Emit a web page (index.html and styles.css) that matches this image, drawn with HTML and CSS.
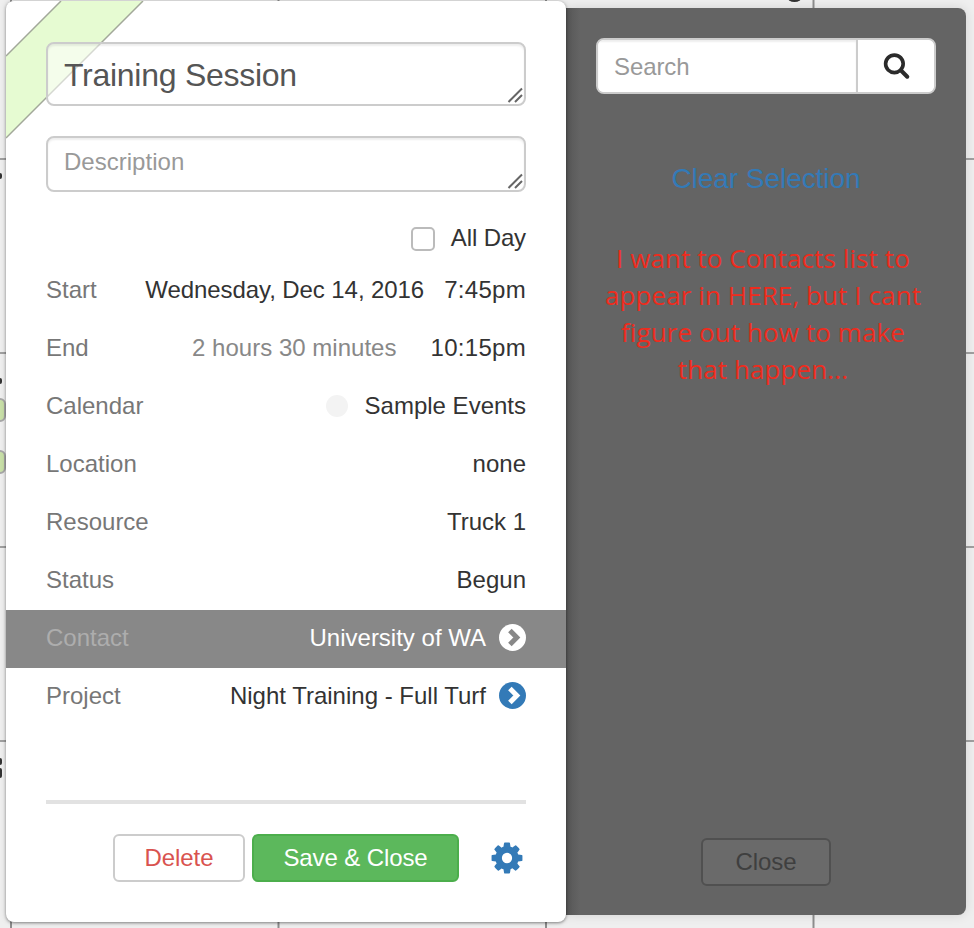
FILE: index.html
```html
<!DOCTYPE html>
<html lang="en">
<head>
<meta charset="utf-8">
<title>Training Session</title>
<link rel="stylesheet" href="styles.css">
</head>
<body>
<div class="calendar">
  <span class="day-dot"></span>
  <span class="pill pill-a"></span>
  <span class="pill pill-b"></span>
  <span class="date-mark mark-a"></span>
  <span class="date-mark mark-b"></span>
  <span class="date-mark mark-c"></span>
  <span class="date-mark mark-d"></span>
</div>
<main class="popover">
  <section class="card">
    <svg class="band" width="140" height="140" viewBox="0 0 140 140" aria-hidden="true">
      <polygon points="55,0 137,0 0,137 0,55" fill="#e6fbd2"/>
      <path d="M55 0 0 55M137 0 0 137" stroke="#a2a89a" stroke-width="1.5" fill="none"/>
    </svg>
    <div class="card-body">
      <div class="field-wrap">
        <textarea class="field field-title" rows="1">Training Session</textarea>
        <svg class="grip" width="16" height="16" viewBox="0 0 16 16" aria-hidden="true"><path d="M1.5 15 15 1.5M8 15 15 8" stroke="#666" stroke-width="2" fill="none"/></svg>
      </div>
      <div class="field-wrap field-wrap-desc">
        <textarea class="field field-desc" rows="1" placeholder="Description"></textarea>
        <svg class="grip" width="16" height="16" viewBox="0 0 16 16" aria-hidden="true"><path d="M1.5 15 15 1.5M8 15 15 8" stroke="#666" stroke-width="2" fill="none"/></svg>
      </div>
      <label class="allday"><input class="check" type="checkbox"><span class="allday-text">All Day</span></label>
      <div class="row"><span class="label">Start</span><span class="value date-pair"><span>Wednesday, Dec 14, 2016</span><span class="time">7:45pm</span></span></div>
      <div class="row"><span class="label">End</span><span class="value date-pair wide"><span class="muted">2 hours 30 minutes</span><span class="time">10:15pm</span></span></div>
      <div class="row"><span class="label">Calendar</span><span class="value cal-value"><span class="cal-dot"></span><span>Sample Events</span></span></div>
      <div class="row"><span class="label">Location</span><span class="value">none</span></div>
      <div class="row"><span class="label">Resource</span><span class="value">Truck 1</span></div>
      <div class="row"><span class="label">Status</span><span class="value">Begun</span></div>
      <div class="row row-active"><span class="label">Contact</span><span class="value link-value"><span>University of WA</span>
        <svg class="chev" width="27" height="27" viewBox="0 0 27 27" aria-hidden="true"><circle cx="13.5" cy="13.5" r="13.5" fill="#fff"/><path d="M10.9 6.6 17.8 13.5 10.9 20.4" fill="none" stroke="#888" stroke-width="5"/></svg></span></div>
      <div class="row"><span class="label">Project</span><span class="value link-value"><span>Night Training - Full Turf</span>
        <svg class="chev" width="27" height="27" viewBox="0 0 27 27" aria-hidden="true"><circle cx="13.5" cy="13.5" r="13.5" fill="#337ab7"/><path d="M10.9 6.6 17.8 13.5 10.9 20.4" fill="none" stroke="#fff" stroke-width="5"/></svg></span></div>
      <div class="divider"></div>
      <div class="actions">
        <button class="btn btn-delete" type="button">Delete</button>
        <button class="btn btn-save" type="button">Save &amp; Close</button>
        <svg class="gear" width="36" height="36" viewBox="0 0 1792 1792" aria-hidden="true"><path fill="#337ab7" d="M1152 896q0-106-75-181t-181-75-181 75-75 181 75 181 181 75 181-75 75-181zm512-109v222q0 12-8 23t-20 13l-185 28q-19 54-39 91 35 50 107 138 10 12 10 25t-9 23q-27 37-99 108t-94 71q-12 0-26-9l-138-108q-44 23-91 38-16 136-29 186-7 28-36 28h-222q-14 0-24.5-8.5t-11.5-21.5l-28-184q-49-16-90-37l-141 107q-10 9-25 9-14 0-25-11-126-114-165-168-7-10-7-23 0-12 8-23 15-21 51-66.5t54-70.5q-27-50-41-99l-183-27q-13-2-21-12.5t-8-23.5v-222q0-12 8-23t19-13l186-28q14-46 39-92-40-57-107-138-10-12-10-24 0-10 9-23 26-36 98.5-107.5t94.5-71.5q13 0 26 10l138 107q44-23 91-38 16-136 29-186 7-28 36-28h222q14 0 24.5 8.5t11.5 21.5l28 184q49 16 90 37l142-107q9-9 24-9 13 0 25 10 129 119 165 170 7 8 7 22 0 12-8 23-15 21-51 66.5t-54 70.5q26 50 41 98l183 28q13 2 21 12.5t8 23.5z"/></svg>
      </div>
    </div>
  </section>
  <aside class="side">
    <div class="search">
      <input class="search-input" type="text" placeholder="Search">
      <button class="search-btn" type="button" aria-label="Search">
        <svg width="30" height="30" viewBox="0 0 28 28" aria-hidden="true"><circle cx="12.5" cy="12" r="8.2" fill="none" stroke="#2b2b2b" stroke-width="3.4"/><path d="M18.5 18 24.5 24" stroke="#2b2b2b" stroke-width="3.8" stroke-linecap="round"/></svg>
      </button>
    </div>
    <a class="clear" href="#">Clear Selection</a>
    <p class="note">I want to Contacts list to appear in HERE, but I cant figure out how to make that happen...</p>
    <button class="btn btn-close" type="button">Close</button>
  </aside>
</main>
</body>
</html>
```
FILE: styles.css
```css
html, body {
  margin: 0;
  padding: 0;
  width: 974px;
  height: 928px;
  overflow: hidden;
}
body {
  position: relative;
  background: #ececec;
  font-family: "Liberation Sans", Arial, sans-serif;
  font-size: 24px;
  color: #333;
}
.calendar {
  position: absolute;
  inset: 0;
  background-color: #efefef;
  background-image:
    linear-gradient(to right, #8e8e8e 2px, transparent 2px),
    linear-gradient(to bottom, #a0a0a0 2px, transparent 2px);
  background-size: 267.5px 100%, 100% 194px;
  background-position: 10px 0, 0 -36px;
}
.day-dot {
  position: absolute;
  left: 787px;
  top: -9px;
  width: 15px;
  height: 11px;
  border-radius: 50%;
  background: #333;
}
.pill {
  position: absolute;
  left: -8px;
  width: 10px;
  height: 20px;
  background: #c9e0a8;
  border: 2px solid #a8a8a8;
  border-radius: 6px;
}
.pill-a { top: 398px; }
.pill-b { top: 450px; }
.date-mark {
  position: absolute;
  left: 0;
  width: 2px;
  background: #333;
  border-radius: 0 2px 2px 0;
}
.mark-a { top: 173px; height: 6px; }
.mark-b { top: 378px; height: 6px; }
.mark-c { top: 758px; height: 7px; }
.mark-d { top: 768px; height: 10px; }
.popover {
  position: relative;
  display: flex;
  align-items: flex-start;
  padding: 1px 0 0 6px;
}
.card {
  position: relative;
  z-index: 1;
  width: 560px;
  height: 921px;
  background: #fff;
  border-radius: 8px;
  box-shadow: 0 1px 3px rgba(0, 0, 0, .4), 0 0 6px rgba(0, 0, 0, .15);
  overflow: hidden;
  flex: none;
}
.band {
  position: absolute;
  left: 0;
  top: 0;
}
.card-body {
  position: relative;
  display: flex;
  flex-direction: column;
  padding: 41px 0 0;
}
.field-wrap {
  position: relative;
  margin: 0 40px;
}
.field-wrap-desc { margin-top: 30px; }
.grip {
  position: absolute;
  right: 3px;
  bottom: 3px;
}
.field {
  display: block;
  box-sizing: border-box;
  width: 480px;
  padding: 0 16px;
  border: 2px solid #ccc;
  border-radius: 8px;
  background: rgba(255, 255, 255, .55);
  box-shadow: inset 0 2px 2px rgba(0, 0, 0, .07);
  font-family: inherit;
  color: #555;
  outline: none;
  resize: none;
  overflow: hidden;
}
.field::placeholder { color: #999; opacity: 1; }
.field-title {
  height: 64px;
  font-size: 32px;
  line-height: 62px;
  letter-spacing: -.27px;
}
.field-desc {
  height: 56px;
  font-size: 24px;
  line-height: 48px;
  letter-spacing: .02px;
}
.allday {
  display: flex;
  justify-content: flex-end;
  align-items: center;
  gap: 16px;
  height: 28px;
  margin: 32px 40px 0;
}
.allday-text { letter-spacing: -.12px; }
.check {
  appearance: none;
  box-sizing: border-box;
  width: 24px;
  height: 24px;
  margin: 2px 0 0;
  background: #fff;
  border: 2px solid #bbb;
  border-radius: 5px;
}
.row {
  display: flex;
  justify-content: space-between;
  align-items: center;
  box-sizing: border-box;
  height: 58px;
  padding: 0 40px;
}
.allday + .row { margin-top: 9px; }
.label { color: #777; }
.value { color: #333; white-space: nowrap; }
.date-pair { display: flex; gap: 20px; letter-spacing: -.08px; }
.date-pair .time { letter-spacing: .3px; }
.date-pair.wide { gap: 34px; }
.muted { color: #888; letter-spacing: .02px; }
.cal-value { display: flex; align-items: center; gap: 17px; }
.cal-dot {
  width: 22px;
  height: 22px;
  border-radius: 50%;
  background: #f3f3f3;
}
.link-value { display: flex; align-items: center; gap: 13px; }
.chev { display: block; margin-top: -2px; }
.row-active {
  background: #888;
  margin: 1px 0 -1px;
  padding-bottom: 2px;
}
.row-active .label { color: #adadad; }
.row-active .value { color: #fff; }
.divider {
  height: 4px;
  margin: 75px 40px 0;
  background: #e2e2e2;
}
.actions {
  display: flex;
  align-items: center;
  justify-content: flex-end;
  margin: 30px 40px 0 0;
}
.btn {
  box-sizing: border-box;
  height: 48px;
  padding: 0;
  border-radius: 6px;
  font-family: inherit;
  font-size: 24px;
  letter-spacing: -.1px;
}
.btn-delete {
  width: 132px;
  background: #fff;
  border: 2px solid #ccc;
  color: #d9534f;
}
.btn-save {
  width: 207px;
  margin-left: 7px;
  background: #5cb85c;
  border: 2px solid #4cae4c;
  color: #fff;
}
.gear { margin-left: 30px; margin-right: 1px; display: block; }
.side {
  position: relative;
  box-sizing: border-box;
  flex: none;
  width: 400px;
  height: 907px;
  margin-top: 7px;
  padding: 30px 30px 0;
  display: flex;
  flex-direction: column;
  align-items: center;
  background: #646464;
  background-image: linear-gradient(to right, #565656, #646464 14px);
  border-radius: 0 8px 8px 0;
  box-shadow: 0 0 12px rgba(0, 0, 0, .12);
}
.search {
  display: flex;
  width: 340px;
  height: 56px;
  box-sizing: border-box;
  flex: none;
  background: #fff;
  border: 2px solid #ccc;
  border-radius: 8px;
  overflow: hidden;
}
.search-input {
  box-sizing: border-box;
  width: 260px;
  height: 100%;
  padding: 2px 16px 0;
  border: 0;
  border-right: 2px solid #ccc;
  box-shadow: inset 0 2px 2px rgba(0, 0, 0, .07);
  font-family: inherit;
  font-size: 24px;
  letter-spacing: -.1px;
  outline: none;
  background: #fff;
}
.search-input::placeholder { color: #999; opacity: 1; }
.search-btn {
  flex: 1;
  border: 0;
  padding: 0;
  background: #fff;
  display: flex;
  align-items: center;
  justify-content: center;
}
.clear {
  margin-top: 67px;
  font-size: 28px;
  line-height: 36px;
  letter-spacing: -.05px;
  color: #337ab7;
  text-decoration: none;
}
.note {
  margin: 42.5px 6px 0 0;
  width: 330px;
  font-family: "Open Sans", sans-serif;
  font-size: 26px;
  letter-spacing: .1px;
  line-height: 37px;
  text-align: center;
  color: #ee2c1e;
}
.btn-close {
  position: absolute;
  left: 135px;
  top: 830px;
  width: 130px;
  background: #6a6a6a;
  border: 2px solid #505050;
  color: #3f3f3f;
}
```
